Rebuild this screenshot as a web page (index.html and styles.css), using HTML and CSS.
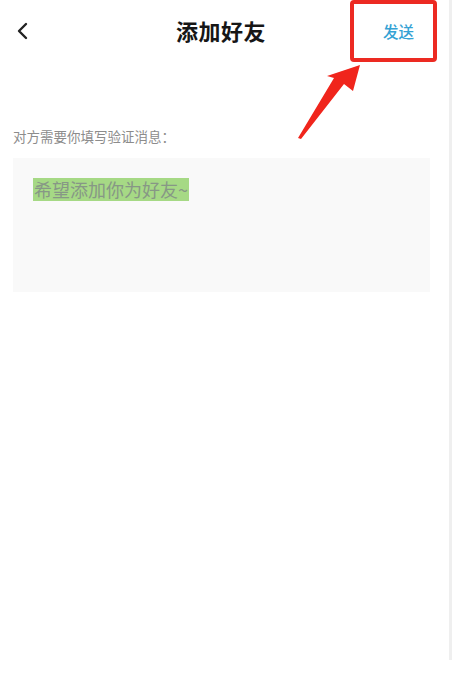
FILE: index.html
```html
<!DOCTYPE html>
<html>
<head>
<meta charset="utf-8">
<link rel="stylesheet" href="styles.css">
</head>
<body>
<div class="page">
  <header class="header">
    <div class="back">
      <svg width="14" height="18" viewBox="0 0 14 18"><path d="M10 2 L3 9 L10 16" fill="none" stroke="#222" stroke-width="2.4" stroke-linecap="round" stroke-linejoin="round"/></svg>
    </div>
    <h1 class="title">添加好友</h1>
    <div class="send">发送</div>
  </header>
  <main class="content">
    <p class="label">对方需要你填写验证消息：</p>
    <div class="msgbox"><span class="msg">希望添加你为好友~</span></div>
  </main>
  <div class="redbox"></div>
  <svg class="arrow" width="80" height="90" viewBox="0 0 80 90">
    <polygon points="79,2 72,28 63,21 20,76 17,75 53,15 46,13" fill="#f0251c"/>
  </svg>
  <div class="edge"></div>
</div>
</body>
</html>
```
FILE: styles.css
```css
html, body {
  margin: 0;
  padding: 0;
  background: #fff;
}
body {
  font-family: "Noto Sans CJK SC", "Noto Sans", sans-serif;
}
.page {
  position: relative;
  width: 452px;
  height: 695px;
  overflow: hidden;
}
.header {
  display: flex;
  align-items: center;
  justify-content: space-between;
  height: 62px;
  padding: 0 38px 0 16px;
}
.back {
  width: 60px;
  display: flex;
  align-items: center;
}
.back svg {
  display: block;
}
.title {
  margin: 0 0 2px 12px;
  font-size: 22px;
  font-weight: 700;
  color: #161616;
  line-height: 1;
  letter-spacing: 0.5px;
}
.send {
  width: 60px;
  text-align: right;
  font-size: 15.5px;
  font-weight: 500;
  color: #35a2d4;
}
.content {
  padding: 64px 22px 0 13px;
}
.label {
  margin: 0;
  font-size: 13.5px;
  color: #8c8c8c;
  line-height: 20px;
}
.msgbox {
  margin-top: 12px;
  height: 134px;
  background: #f9f9f9;
  padding: 20px 0 0 20px;
  box-sizing: border-box;
}
.msg {
  display: inline-block;
  background: #a6d985;
  color: #879786;
  font-size: 18px;
  line-height: 23px;
  padding: 0 1px;
}
.redbox {
  position: absolute;
  left: 350px;
  top: 0px;
  width: 87px;
  height: 62px;
  box-sizing: border-box;
  border: 4px solid #ec2a22;
  border-radius: 4px;
}
.arrow {
  position: absolute;
  left: 281px;
  top: 63px;
}
.edge {
  position: absolute;
  right: 0;
  top: 0;
  width: 3px;
  height: 660px;
  background: #efefef;
}
```
